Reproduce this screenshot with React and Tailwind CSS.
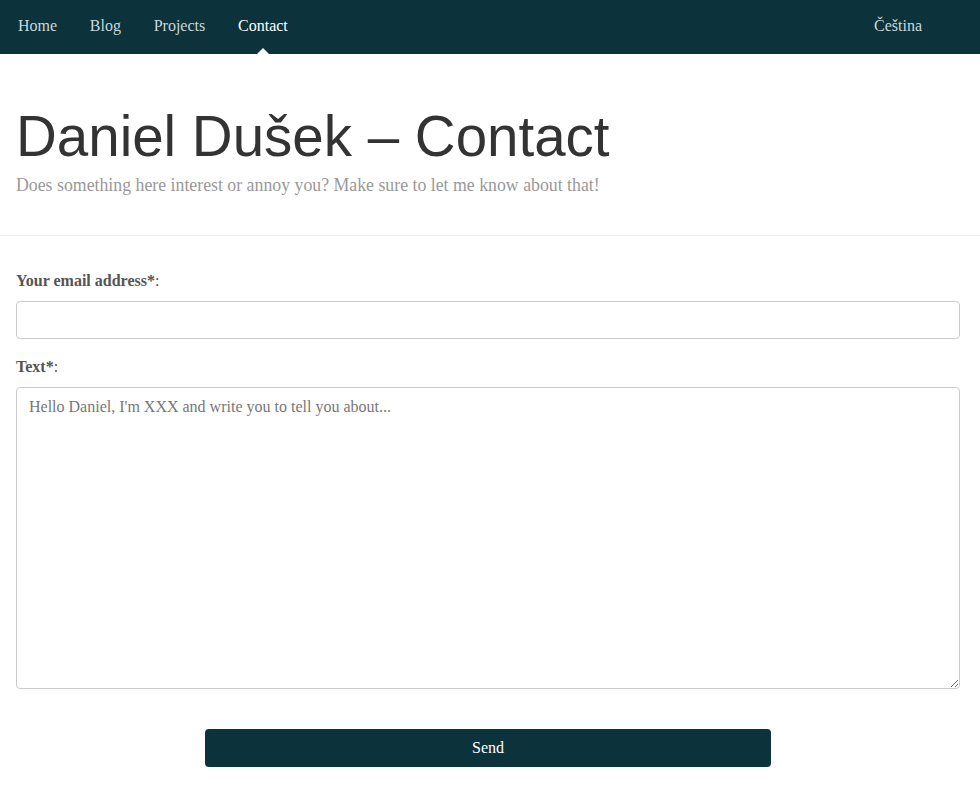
import { useState } from "react";

const serif = { fontFamily: '"Liberation Serif", "Times New Roman", serif' };

function NavBar() {
  const items = ["Home", "Blog", "Projects", "Contact"];
  return (
    <nav className="h-[54px] bg-[#0c323b] flex items-center pl-[1.5px]">
      <ul className="flex h-full">
        {items.map((item) => (
          <li key={item} className="relative h-full flex items-center">
            <a
              href="#"
              className={
                "px-[16.4px] pb-[2px] text-[16px] " +
                (item === "Contact" ? "text-white" : "text-[#c9d8dc]")
              }
            >
              {item}
            </a>
            {item === "Contact" && (
              <span className="absolute bottom-0 left-1/2 -translate-x-1/2 w-0 h-0 border-x-[6px] border-x-transparent border-b-[6px] border-b-white" />
            )}
          </li>
        ))}
      </ul>
      <a href="#" className="ml-auto mr-[58px] pb-[2px] text-[16px] text-[#c9d8dc]">
        Čeština
      </a>
    </nav>
  );
}

export default function App() {
  const [email, setEmail] = useState("");
  const [text, setText] = useState("");

  return (
    <div className="min-h-screen bg-white text-[#333]" style={serif}>
      <NavBar />
      <header className="pl-4 pr-5 pt-[49px] pb-[36px] border-b border-[#eee]">
        <h1
          className="text-[56.5px] leading-[67px] text-[#333]"
          style={{ fontFamily: '"Liberation Sans", Arial, sans-serif' }}
        >
          Daniel Dušek – Contact
        </h1>
        <p className="text-[17.8px] text-[#999] mt-[2px]">
          Does something here interest or annoy you? Make sure to let me know about that!
        </p>
      </header>
      <form className="pl-4 pr-5 pt-[33px]" onSubmit={(e) => e.preventDefault()}>
        <label className="block text-[16px] text-[#555] mb-[8px]">
          <b>Your email address*</b>:
        </label>
        <input
          type="email"
          value={email}
          onChange={(e) => setEmail(e.target.value)}
          className="block w-full h-[38px] border border-[#ccc] rounded-[4px] px-3 text-[16px] outline-none"
        />
        <label className="block text-[16px] text-[#555] mt-[16px] mb-[8px]">
          <b>Text*</b>:
        </label>
        <textarea
          value={text}
          onChange={(e) => setText(e.target.value)}
          placeholder="Hello Daniel, I'm XXX and write you to tell you about..."
          className="block w-full h-[302px] border border-[#ccc] rounded-[4px] px-3 py-[7px] text-[16px] text-[#555] placeholder:text-[#777] outline-none"
        />
        <div className="flex justify-center pt-[40px]">
          <button
            type="submit"
            className="w-[60%] h-[38px] bg-[#0c323b] text-white text-[16px] rounded-[4px]"
          >
            Send
          </button>
        </div>
      </form>
    </div>
  );
}
